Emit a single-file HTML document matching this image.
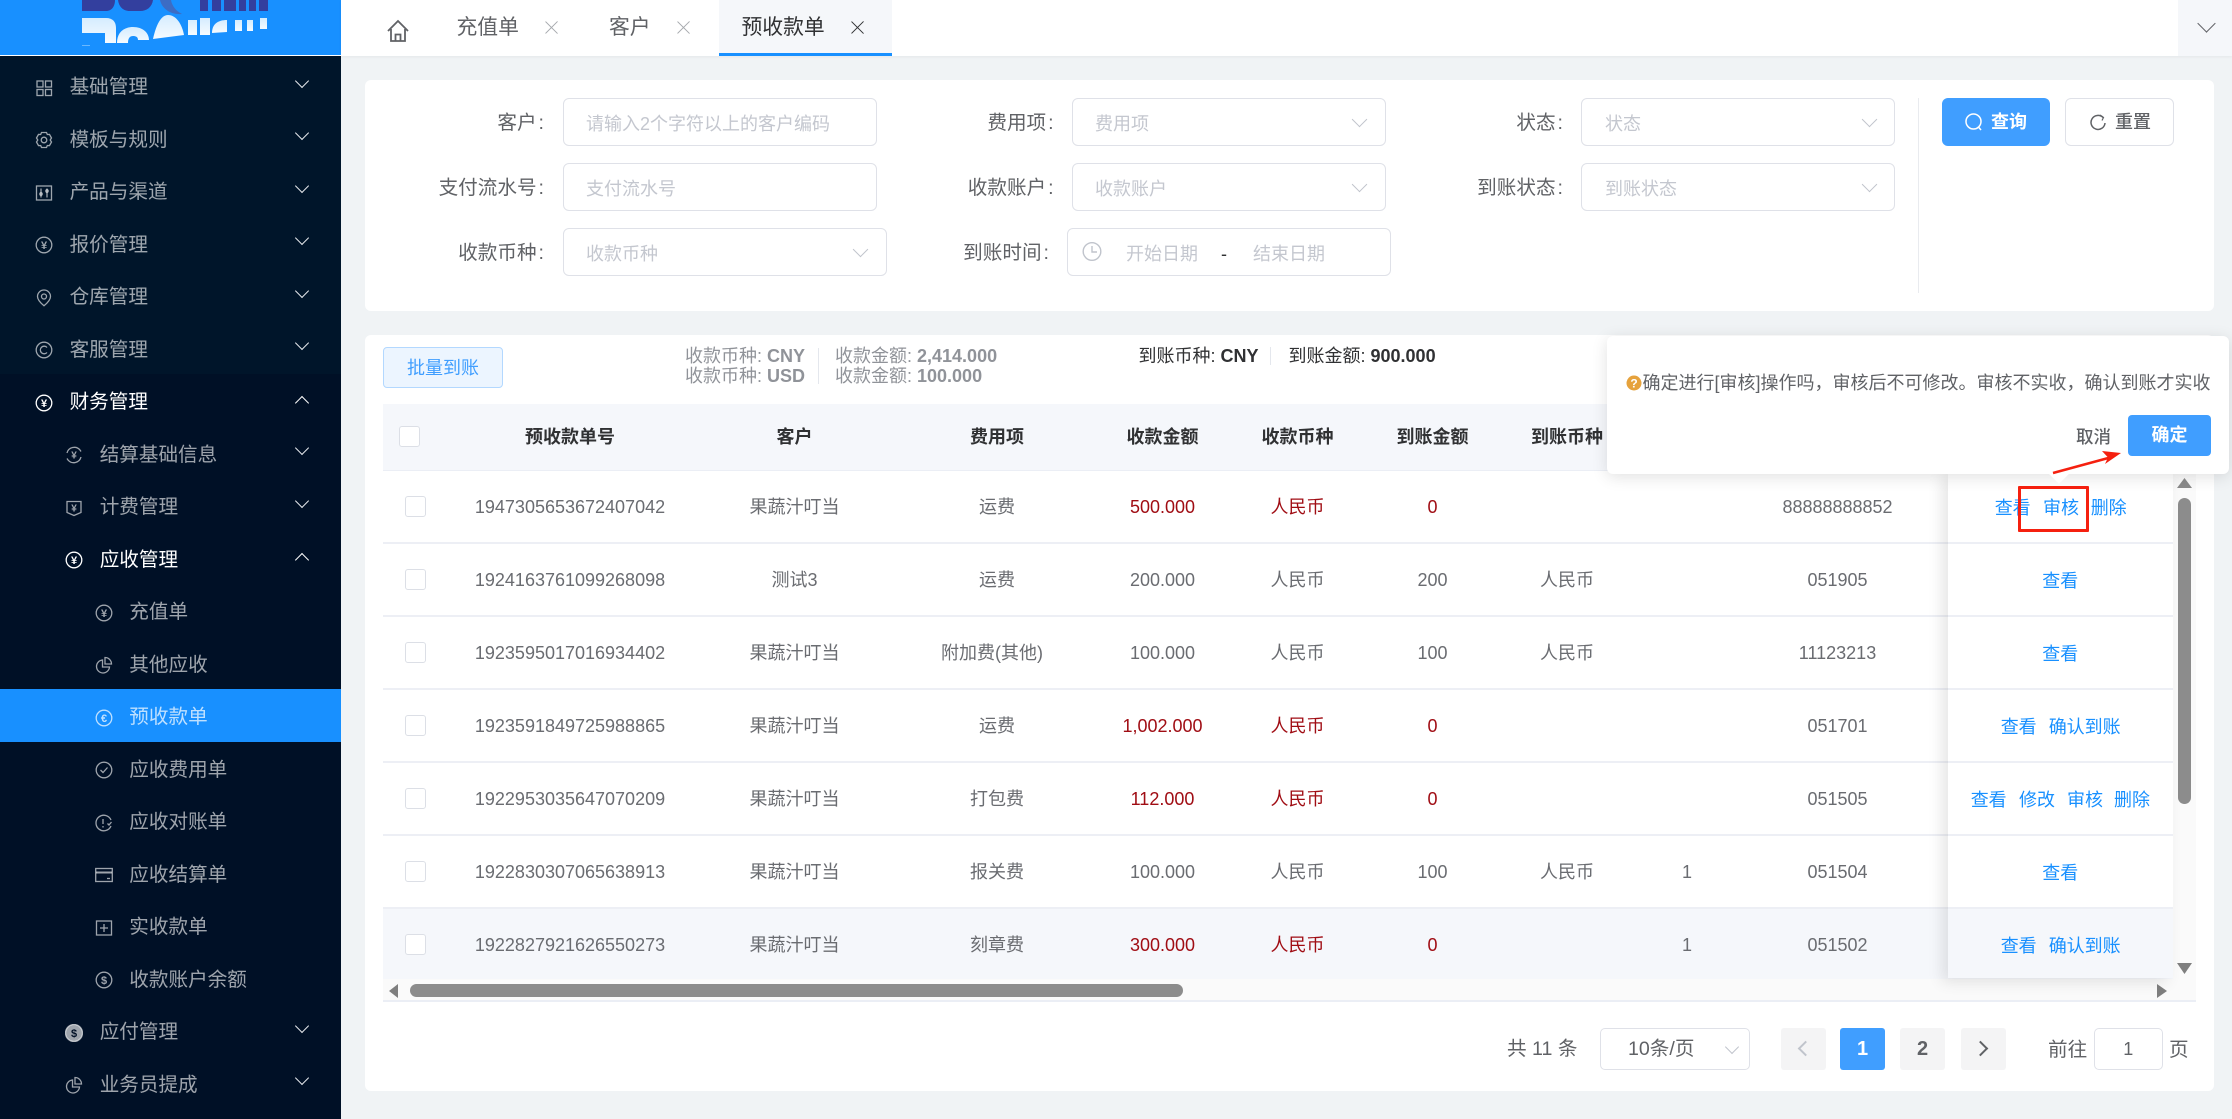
<!DOCTYPE html>
<html lang="zh-CN">
<head>
<meta charset="utf-8">
<title>预收款单</title>
<style>
*{box-sizing:border-box}
html,body{margin:0;padding:0}
body{position:relative;width:2232px;height:1119px;overflow:hidden;background:#f0f3f5;font-family:"Liberation Sans","Noto Sans CJK SC",sans-serif;color:#606266;font-size:18px}
.a{position:absolute;white-space:nowrap}
#side{position:absolute;left:0;top:0;width:341px;height:1119px;background:#00152a;overflow:hidden}
#logo{position:absolute;left:0;top:0;width:341px;height:55px;background:#1890ff}
#wl{position:absolute;left:0;top:55px;width:341px;height:1px;background:#fff}
#sub{position:absolute;left:0;top:374px;width:341px;height:745px;background:#001026}
#menu{position:absolute;left:0;top:59px;width:341px}
.m{position:relative;height:52.5px;line-height:57px;font-size:19.6px;color:rgba(255,255,255,.62);white-space:nowrap}
.m span{position:absolute;top:0}
.l0 span{left:69.6px}.l1 span{left:99.7px}.l2 span{left:129.3px}
.m svg{position:absolute;top:19.7px;width:18px;height:18px;fill:none;stroke:currentColor;stroke-width:1.3}
.m svg text{fill:currentColor;stroke:none;font-family:"Liberation Sans",sans-serif;text-anchor:middle;font-weight:700}
.l0 svg{left:35px}.l1 svg{left:65px}.l2 svg{left:95px}
.m.on{color:#fff}
.m.act{background:#1890ff;color:rgba(255,255,255,.72)}
.ch{position:absolute;left:297px;top:16.8px;width:10px;height:10px;border-right:1.5px solid #e6e9ed;border-bottom:1.5px solid #e6e9ed;transform:rotate(45deg)}
.ch.up{top:23.5px;transform:rotate(-135deg)}
#tabs{position:absolute;left:341px;top:0;width:1891px;height:56px;background:#fff;box-shadow:0 1px 3px rgba(0,0,0,.05)}
.tab{font-size:20.8px;line-height:56px;top:0;color:#606266}
.x{position:absolute;width:14px;height:14px;top:20px}
.x:before,.x:after{content:"";position:absolute;left:6.4px;top:-1.5px;width:1.2px;height:17px;background:#a6a9ad;transform:rotate(45deg)}
.x:after{transform:rotate(-45deg)}
.x.dk:before,.x.dk:after{background:#303133}
.panel{position:absolute;background:#fff;border-radius:6px}
.ip{position:absolute;height:48px;border:1.5px solid #dfe1e8;border-radius:6px;background:#fff}
.ph{position:absolute;color:#c4c7cf;font-size:18px;line-height:48px;white-space:nowrap}
.lb{position:absolute;font-size:19.6px;line-height:50px;color:#606266;white-space:nowrap;text-align:right}
.lb b{font-weight:400;margin-left:2px}
.sc{position:absolute;width:11px;height:11px;border-right:1.5px solid #c0c4cc;border-bottom:1.5px solid #c0c4cc;transform:rotate(45deg)}
.g{color:#909399}
.d{color:#303133}
.b{font-weight:700}
.row{position:absolute;left:383px;width:1790px;height:73px;border-bottom:2px solid #edeff5;background:#fff}
.c{position:absolute;top:0;line-height:72px;font-size:18px;white-space:nowrap;transform:translateX(-50%);color:#6a6c71}
.r{color:#a00d14}
.cb{position:absolute;left:21.5px;top:25px;width:21px;height:21px;border:1.5px solid #dcdfe6;border-radius:3px;background:#fff}
.c1{left:187px}.c2{left:411.5px}.c3{left:614px}.c4{left:779.5px}.c5{left:914.5px}.c6{left:1049.5px}.c7{left:1184px}.c8{left:1304px}.c9{left:1454.5px}
.h{position:absolute;top:0;line-height:66px;font-size:18px;font-weight:700;color:#303133;white-space:nowrap;transform:translateX(-50%)}
#fix{position:absolute;left:1948px;top:471px;width:225px;height:507px;background:#fff;box-shadow:-6px 4px 14px rgba(0,0,0,.1)}
.fr{position:relative;height:73px;border-bottom:2px solid #edeff5;background:#fff}
.lk{position:absolute;top:0;line-height:74px;color:#1890ff;font-size:18px;white-space:nowrap}
.pg{position:absolute;top:1028px;height:42px;width:45px;border-radius:3px;background:#f4f4f5;text-align:center;line-height:42px;font-weight:700;font-size:20px;color:#606266}
</style>
</head>
<body>

<!-- Sidebar -->
<div id="side">
  <div id="sub"></div>
  <div id="logo">
    <svg width="341" height="55" style="position:absolute;left:0;top:0">
      <defs><linearGradient id="wg" x1="0" y1="0" x2="0" y2="1"><stop offset="0" stop-color="#d5ecff"/><stop offset="1" stop-color="#f6fbff"/></linearGradient></defs>
      <g fill="#333f9e">
        <path d="M82 0H115C115 6 112 11 106 11H82Z"/>
        <path d="M118 0H153C152 7 147 11 140 11H130C123 11 119 7 118 0Z"/>
        <path d="M160 0C162 9 171 15 182 14C176 11 172 6 171 0Z" fill="#3c6cc4"/>
        <rect x="200" y="0" width="8" height="11"/>
        <rect x="212" y="0" width="9" height="11"/>
        <rect x="224" y="0" width="12" height="11"/>
        <rect x="239" y="0" width="7" height="11"/>
        <rect x="249" y="0" width="7" height="11"/>
        <rect x="259" y="0" width="9" height="11"/>
      </g>
      <g fill="url(#wg)">
        <path d="M82 18H106C113 18 116 22 116 28V43H105V33H82Z"/>
        <path d="M117 43C117 33 123 27 133 27C143 27 149 33 149 40H138C138 37 136 36 133 36C130 36 128 38 128 43Z"/>
        <path d="M153 39L184 35C182 24 176 15 168 15C161 15 156 25 153 39Z"/>
        <rect x="188" y="20" width="9" height="15"/>
        <rect x="200" y="18" width="10" height="17"/>
        <path d="M212 33C212 24 218 20 227 20V32Z"/>
        <rect x="235" y="20" width="7" height="11"/>
        <rect x="247" y="20" width="6" height="11"/>
        <rect x="260" y="18" width="7" height="11"/>
        <rect x="82" y="45" width="8" height="1" opacity=".4"/>
      </g>
    </svg>
  </div>
  <div id="wl"></div>
  <div id="menu">
    <div class="m l0"><svg viewBox="0 0 18 18"><rect x="2" y="2" width="6" height="6"/><rect x="10.5" y="2" width="6" height="6"/><rect x="2" y="10.5" width="6" height="6"/><rect x="10.5" y="10.5" width="6" height="6"/></svg><span>基础管理</span><i class="ch"></i></div>
    <div class="m l0"><svg viewBox="0 0 18 18"><path d="M6.5 1.5h5l.8 2 2.2-.1 2 3.6-1.3 2 1.3 2-2 3.6-2.2-.1-.8 2h-5l-.8-2-2.2.1-2-3.6 1.3-2-1.3-2 2-3.6 2.2.1z"/><circle cx="9" cy="9" r="2.8"/></svg><span>模板与规则</span><i class="ch"></i></div>
    <div class="m l0"><svg viewBox="0 0 18 18"><rect x="1.5" y="2" width="15" height="14"/><path d="M6 4.5v9M12 4.5v9"/><circle cx="6" cy="10" r="1.2"/><circle cx="12" cy="7" r="1.2"/></svg><span>产品与渠道</span><i class="ch"></i></div>
    <div class="m l0"><svg viewBox="0 0 18 18"><circle cx="9" cy="9" r="7.8"/><text x="9" y="13" font-size="11">¥</text></svg><span>报价管理</span><i class="ch"></i></div>
    <div class="m l0"><svg viewBox="0 0 18 18"><path d="M9 16.8C5 13.5 2.5 10.5 2.5 7.5a6.5 6.5 0 0 1 13 0C15.5 10.5 13 13.5 9 16.8Z"/><circle cx="9" cy="7.5" r="2.5"/></svg><span>仓库管理</span><i class="ch"></i></div>
    <div class="m l0"><svg viewBox="0 0 18 18"><circle cx="9" cy="9" r="7.8"/><path d="M12 6.5a3.8 3.8 0 1 0 0 5"/></svg><span>客服管理</span><i class="ch"></i></div>
    <div class="m l0 on"><svg viewBox="0 0 18 18"><circle cx="9" cy="9" r="7.8"/><text x="9" y="13" font-size="11">¥</text></svg><span>财务管理</span><i class="ch up" style="border-color:#fff"></i></div>
    <div class="m l1"><svg viewBox="0 0 18 18"><path d="M2 7a7.5 7.5 0 0 1 13-3l1 1.5M16 11a7.5 7.5 0 0 1-13 3l-1-1.5"/><text x="9" y="12.5" font-size="10">¥</text></svg><span>结算基础信息</span><i class="ch"></i></div>
    <div class="m l1"><svg viewBox="0 0 18 18"><path d="M2 2.5h14v11l-7 3-7-3z"/><text x="9" y="12.5" font-size="10">¥</text></svg><span>计费管理</span><i class="ch"></i></div>
    <div class="m l1 on"><svg viewBox="0 0 18 18"><circle cx="9" cy="9" r="7.8"/><text x="9" y="13" font-size="11">¥</text></svg><span>应收管理</span><i class="ch up" style="border-color:#fff"></i></div>
    <div class="m l2"><svg viewBox="0 0 18 18"><circle cx="9" cy="9" r="7.8"/><text x="9" y="13" font-size="11">¥</text></svg><span>充值单</span></div>
    <div class="m l2"><svg viewBox="0 0 18 18"><path d="M7.5 4A6.5 6.5 0 1 0 14.5 11H7.5Z"/><path d="M10 1.5a6.5 6.5 0 0 1 6.5 6.5H10Z"/></svg><span>其他应收</span></div>
    <div class="m l2 act"><svg viewBox="0 0 18 18"><circle cx="9" cy="9" r="7.8"/><text x="9" y="13" font-size="11">€</text></svg><span>预收款单</span></div>
    <div class="m l2"><svg viewBox="0 0 18 18"><circle cx="9" cy="9" r="7.8"/><path d="M5.5 9l2.5 2.5 4.5-5"/></svg><span>应收费用单</span></div>
    <div class="m l2"><svg viewBox="0 0 18 18"><path d="M16 6A7.800 7.800 0 1 0 16 12"/><path d="M8 5v5M8 12v1.500M12.500 9.500l1.500 1.500 2.500-3"/></svg><span>应收对账单</span></div>
    <div class="m l2"><svg viewBox="0 0 18 18"><rect x="0.7" y="2.5" width="16.6" height="13"/><path d="M1 6.500h16" stroke-width="2"/><path d="M12 12.500h3"/></svg><span>应收结算单</span></div>
    <div class="m l2"><svg viewBox="0 0 18 18"><rect x="1.5" y="2" width="15" height="14"/><path d="M9 5v8M5 9h8"/></svg><span>实收款单</span></div>
    <div class="m l2"><svg viewBox="0 0 18 18"><circle cx="9" cy="9" r="7.8"/><text x="9" y="13" font-size="11">$</text></svg><span>收款账户余额</span></div>
    <div class="m l1"><svg viewBox="0 0 18 18"><circle cx="9" cy="9" r="8.5" fill="currentColor"/><text x="9" y="13" font-size="11" style="fill:#001026">$</text></svg><span>应付管理</span><i class="ch"></i></div>
    <div class="m l1"><svg viewBox="0 0 18 18"><path d="M7.5 4A6.5 6.5 0 1 0 14.5 11H7.5Z"/><path d="M10 1.5a6.5 6.5 0 0 1 6.5 6.5H10Z"/></svg><span>业务员提成</span><i class="ch"></i></div>
  </div>
</div>

<!-- Tabs -->
<div id="tabs"></div>
<svg class="a" style="left:386px;top:19px" width="24" height="24" viewBox="0 0 24 24" fill="none" stroke="#606266" stroke-width="1.8"><path d="M2 12L12 2l10 10M5 10v12h14V10"/><path d="M9.5 22v-6.500h5V22"/></svg>
<div class="a tab" style="left:456.5px">充值单</div><i class="x" style="left:545px"></i>
<div class="a tab" style="left:609px">客户</div><i class="x" style="left:677px"></i>
<div class="a" style="left:719px;top:0;width:173px;height:56px;background:#f5f7fa;border-bottom:3px solid #1890ff"></div>
<div class="a tab" style="left:741.5px;color:#303133">预收款单</div>
<i class="x dk" style="left:851px"></i>
<div class="a" style="left:2177.5px;top:0;width:54.5px;height:56px;background:#f5f7fa"></div>
<i class="a" style="left:2200px;top:17px;width:13px;height:13px;border-right:1.5px solid #606266;border-bottom:1.5px solid #606266;transform:rotate(45deg)"></i>

<!-- Search panel -->
<div class="panel" style="left:365px;top:80px;width:1849px;height:231px"></div>

<div class="lb" style="right:1688px;top:98px">客户<b>:</b></div>
<div class="ip" style="left:563px;top:98px;width:314px"></div>
<div class="ph" style="left:586px;top:100px">请输入2个字符以上的客户编码</div>

<div class="lb" style="right:1688px;top:163px">支付流水号<b>:</b></div>
<div class="ip" style="left:563px;top:163px;width:314px"></div>
<div class="ph" style="left:586px;top:165px">支付流水号</div>

<div class="lb" style="right:1688px;top:228px">收款币种<b>:</b></div>
<div class="ip" style="left:563px;top:228px;width:324px"></div>
<div class="ph" style="left:586px;top:230px">收款币种</div>
<i class="sc" style="left:855px;top:244px"></i>

<div class="lb" style="right:1178.4px;top:98px">费用项<b>:</b></div>
<div class="ip" style="left:1072px;top:98px;width:314px"></div>
<div class="ph" style="left:1095px;top:100px">费用项</div>
<i class="sc" style="left:1354px;top:114px"></i>

<div class="lb" style="right:1178.4px;top:163px">收款账户<b>:</b></div>
<div class="ip" style="left:1072px;top:163px;width:314px"></div>
<div class="ph" style="left:1095px;top:165px">收款账户</div>
<i class="sc" style="left:1354px;top:179px"></i>

<div class="lb" style="right:1183px;top:228px">到账时间<b>:</b></div>
<div class="ip" style="left:1067px;top:228px;width:324px"></div>
<svg class="a" style="left:1082px;top:241px" width="20" height="21" viewBox="0 0 20 20" fill="none" stroke="#c0c4cc" stroke-width="1.4"><circle cx="10" cy="10" r="8.8"/><path d="M10 4.5V10.5H15"/></svg>
<div class="ph" style="left:1126px;top:230px">开始日期</div>
<div class="a" style="left:1221px;top:230px;line-height:48px;color:#303133;font-size:18px">-</div>
<div class="ph" style="left:1253px;top:230px">结束日期</div>

<div class="lb" style="right:669px;top:98px">状态<b>:</b></div>
<div class="ip" style="left:1581px;top:98px;width:314px"></div>
<div class="ph" style="left:1605px;top:100px">状态</div>
<i class="sc" style="left:1863.5px;top:114px"></i>

<div class="lb" style="right:669px;top:163px">到账状态<b>:</b></div>
<div class="ip" style="left:1581px;top:163px;width:314px"></div>
<div class="ph" style="left:1605px;top:165px">到账状态</div>
<i class="sc" style="left:1863.5px;top:179px"></i>

<div class="a" style="left:1918px;top:98px;width:1px;height:195px;background:#e9ebef"></div>
<div class="a" style="left:1942px;top:98px;width:108px;height:48px;background:#409eff;border-radius:6px"></div>
<svg class="a" style="left:1965px;top:113px" width="18" height="19" viewBox="0 0 18 19" fill="none" stroke="#fff" stroke-width="1.5"><circle cx="8.5" cy="8.5" r="7.5"/><path d="M13.5 14l2.5 3"/></svg>
<div class="a b" style="left:1991px;top:98px;line-height:48px;color:#fff;font-size:18px">查询</div>
<div class="a" style="left:2065px;top:98px;width:109px;height:48px;background:#fff;border:1.5px solid #dfe1e8;border-radius:6px"></div>
<svg class="a" style="left:2090px;top:114px" width="16" height="17" viewBox="0 0 16 17" fill="none" stroke="#606266" stroke-width="1.5"><path d="M13 3.5A7 7 0 1 0 15 9"/><path d="M10 1l3.500 2.500L12 6.500" stroke-width="1.2"/></svg>
<div class="a" style="left:2115px;top:98px;line-height:48px;color:#606266;font-size:18px;font-weight:500">重置</div>

<!-- Table panel -->
<div class="panel" style="left:365px;top:335px;width:1849px;height:756px"></div>

<div class="a" style="left:383px;top:347px;width:120px;height:41px;background:#ecf5ff;border:1.5px solid #b3d8ff;border-radius:4px;text-align:center;line-height:40px;color:#409eff;font-size:18px">批量到账</div>

<div class="a g" style="left:685px;top:346px;line-height:20px;font-size:18px">收款币种: <span class="b">CNY</span></div>
<div class="a g" style="left:685px;top:366px;line-height:20px;font-size:18px">收款币种: <span class="b">USD</span></div>
<div class="a" style="left:818px;top:348px;width:1px;height:36px;background:#e4e7ed"></div>
<div class="a g" style="left:835px;top:346px;line-height:20px;font-size:18px">收款金额: <span class="b">2,414.000</span></div>
<div class="a g" style="left:835px;top:366px;line-height:20px;font-size:18px">收款金额: <span class="b">100.000</span></div>
<div class="a d" style="left:1138.5px;top:346px;line-height:20px;font-size:18px">到账币种: <span class="b">CNY</span></div>
<div class="a" style="left:1270px;top:347px;width:1px;height:18px;background:#e4e7ed"></div>
<div class="a d" style="left:1288.5px;top:346px;line-height:20px;font-size:18px">到账金额: <span class="b">900.000</span></div>

<!-- Table header -->
<div class="a" style="left:383px;top:404px;width:1813px;height:67px;background:#f5f7fb;border-bottom:1px solid #ebeef5">
  <i class="cb" style="left:15.5px;top:22px"></i>
  <div class="h c1">预收款单号</div>
  <div class="h c2">客户</div>
  <div class="h c3">费用项</div>
  <div class="h c4">收款金额</div>
  <div class="h c5">收款币种</div>
  <div class="h c6">到账金额</div>
  <div class="h c7">到账币种</div>
</div>

<!-- Rows -->
<div class="row" style="top:471px"><i class="cb"></i><div class="c c1">1947305653672407042</div><div class="c c2">果蔬汁叮当</div><div class="c c3">运费</div><div class="c c4 r">500.000</div><div class="c c5 r">人民币</div><div class="c c6 r">0</div><div class="c c9">88888888852</div></div>
<div class="row" style="top:544px"><i class="cb"></i><div class="c c1">1924163761099268098</div><div class="c c2">测试3</div><div class="c c3">运费</div><div class="c c4">200.000</div><div class="c c5">人民币</div><div class="c c6">200</div><div class="c c7">人民币</div><div class="c c9">051905</div></div>
<div class="row" style="top:617px"><i class="cb"></i><div class="c c1">1923595017016934402</div><div class="c c2">果蔬汁叮当</div><div class="c" style="left:609px">附加费(其他)</div><div class="c c4">100.000</div><div class="c c5">人民币</div><div class="c c6">100</div><div class="c c7">人民币</div><div class="c c9">11123213</div></div>
<div class="row" style="top:690px"><i class="cb"></i><div class="c c1">1923591849725988865</div><div class="c c2">果蔬汁叮当</div><div class="c c3">运费</div><div class="c c4 r">1,002.000</div><div class="c c5 r">人民币</div><div class="c c6 r">0</div><div class="c c9">051701</div></div>
<div class="row" style="top:763px"><i class="cb"></i><div class="c c1">1922953035647070209</div><div class="c c2">果蔬汁叮当</div><div class="c c3">打包费</div><div class="c c4 r">112.000</div><div class="c c5 r">人民币</div><div class="c c6 r">0</div><div class="c c9">051505</div></div>
<div class="row" style="top:836px"><i class="cb"></i><div class="c c1">1922830307065638913</div><div class="c c2">果蔬汁叮当</div><div class="c c3">报关费</div><div class="c c4">100.000</div><div class="c c5">人民币</div><div class="c c6">100</div><div class="c c7">人民币</div><div class="c c8">1</div><div class="c c9">051504</div></div>
<div class="row" style="top:909px;height:70px;background:#f5f7fb;border-bottom:0"><i class="cb"></i><div class="c c1">1922827921626550273</div><div class="c c2">果蔬汁叮当</div><div class="c c3">刻章费</div><div class="c c4 r">300.000</div><div class="c c5 r">人民币</div><div class="c c6 r">0</div><div class="c c8">1</div><div class="c c9">051502</div></div>

<!-- Scroll areas -->
<div class="a" style="left:383px;top:979px;width:1813px;height:23px;background:#fafafa;border-bottom:2px solid #ebeef5"></div>
<div class="a" style="left:2173px;top:471px;width:23px;height:508px;background:#fafafa"></div>
<div class="a" style="left:410px;top:984px;width:773px;height:13px;background:#8c8c8c;border-radius:6.5px"></div>
<svg class="a" style="left:389px;top:984px" width="10" height="14"><path d="M0 7L9 0V14Z" fill="#7f7f7f"/></svg>
<svg class="a" style="left:2156px;top:984px" width="12" height="14"><path d="M11 7L1 0V14Z" fill="#7f7f7f"/></svg>
<div class="a" style="left:2178px;top:498px;width:13px;height:306px;background:#8c8c8c;border-radius:6.5px"></div>
<svg class="a" style="left:2177px;top:478px" width="15" height="11"><path d="M7.5 0L15 10H0Z" fill="#8a8a8a"/></svg>
<svg class="a" style="left:2177px;top:963px" width="15" height="11"><path d="M7.5 11L15 0H0Z" fill="#7f7f7f"/></svg>

<!-- Fixed column -->
<div id="fix">
  <div class="fr"><a class="lk" style="left:46.7px">查看</a><a class="lk" style="left:95px">审核</a><a class="lk" style="left:142.7px">删除</a></div>
  <div class="fr"><a class="lk" style="left:94.3px">查看</a></div>
  <div class="fr"><a class="lk" style="left:94.3px">查看</a></div>
  <div class="fr"><a class="lk" style="left:52.7px">查看</a><a class="lk" style="left:100.7px">确认到账</a></div>
  <div class="fr"><a class="lk" style="left:22.7px">查看</a><a class="lk" style="left:71px">修改</a><a class="lk" style="left:119px">审核</a><a class="lk" style="left:166px">删除</a></div>
  <div class="fr"><a class="lk" style="left:94.3px">查看</a></div>
  <div class="fr" style="height:69px;background:#f5f7fb;border-bottom:0"><a class="lk" style="left:52.7px">查看</a><a class="lk" style="left:100.7px">确认到账</a></div>
</div>

<!-- Pagination -->
<div class="a" style="left:1507px;top:1029px;line-height:40px;font-size:19.6px;color:#606266">共 11 条</div>
<div class="a" style="left:1600px;top:1028px;width:150px;height:42px;border:1.5px solid #dfe1e8;border-radius:5px;background:#fff"></div>
<div class="a" style="left:1628px;top:1028px;line-height:42px;font-size:19.6px;color:#606266">10条/页</div>
<i class="a" style="left:1727px;top:1042px;width:10px;height:10px;border-right:1.2px solid #c0c4cc;border-bottom:1.2px solid #c0c4cc;transform:rotate(45deg)"></i>
<div class="pg" style="left:1780.5px"></div>
<i class="a" style="left:1800px;top:1043px;width:11px;height:11px;border-left:2px solid #c0c4cc;border-bottom:2px solid #c0c4cc;transform:rotate(45deg)"></i>
<div class="pg" style="left:1840px;background:#409eff;color:#fff">1</div>
<div class="pg" style="left:1900px">2</div>
<div class="pg" style="left:1960.5px"></div>
<i class="a" style="left:1975px;top:1043px;width:11px;height:11px;border-right:2px solid #606266;border-top:2px solid #606266;transform:rotate(45deg)"></i>
<div class="a" style="left:2048px;top:1029px;line-height:42px;font-size:19.6px;color:#606266">前往</div>
<div class="a" style="left:2094px;top:1028px;width:68.5px;height:42px;border:1.5px solid #dfe1e8;border-radius:5px;background:#fff;text-align:center;line-height:40px;font-size:18px;color:#606266">1</div>
<div class="a" style="left:2169px;top:1029px;line-height:42px;font-size:19.6px;color:#606266">页</div>

<!-- Popover -->
<div class="a" style="left:1607px;top:336px;width:622px;height:138px;background:#fff;border-radius:6px;box-shadow:0 3px 16px rgba(0,0,0,.12)"></div>
<div class="a" style="left:2052px;top:467px;width:14px;height:14px;background:#fff;transform:rotate(45deg)"></div>
<svg class="a" style="left:1626px;top:375px" width="16" height="16"><circle cx="8" cy="8" r="7.5" fill="#e6a23c"/><text x="8" y="12.5" font-size="12" font-weight="700" fill="#fff" text-anchor="middle" font-family="Liberation Sans,sans-serif">?</text></svg>
<div class="a" style="left:1642.5px;top:372px;line-height:22px;font-size:18px;color:#606266">确定进行[审核]操作吗，审核后不可修改。审核不实收，确认到账才实收</div>
<div class="a" style="left:2076px;top:426px;line-height:22px;font-size:17.5px;color:#606266;font-weight:500">取消</div>
<div class="a b" style="left:2128px;top:415px;width:83px;height:41px;background:#409eff;border-radius:4px;text-align:center;line-height:40px;color:#fff;font-size:18px">确定</div>

<!-- Annotations -->
<div class="a" style="left:2018px;top:486px;width:71px;height:46px;border:3px solid #f5200f;border-radius:1px"></div>
<svg class="a" style="left:2050px;top:446px" width="76" height="30"><path d="M3 27L62 11" stroke="#f5200f" stroke-width="2.5" fill="none"/><path d="M71 7L52 5L58 11.5L55 18Z" fill="#f5200f"/></svg>

</body>
</html>
